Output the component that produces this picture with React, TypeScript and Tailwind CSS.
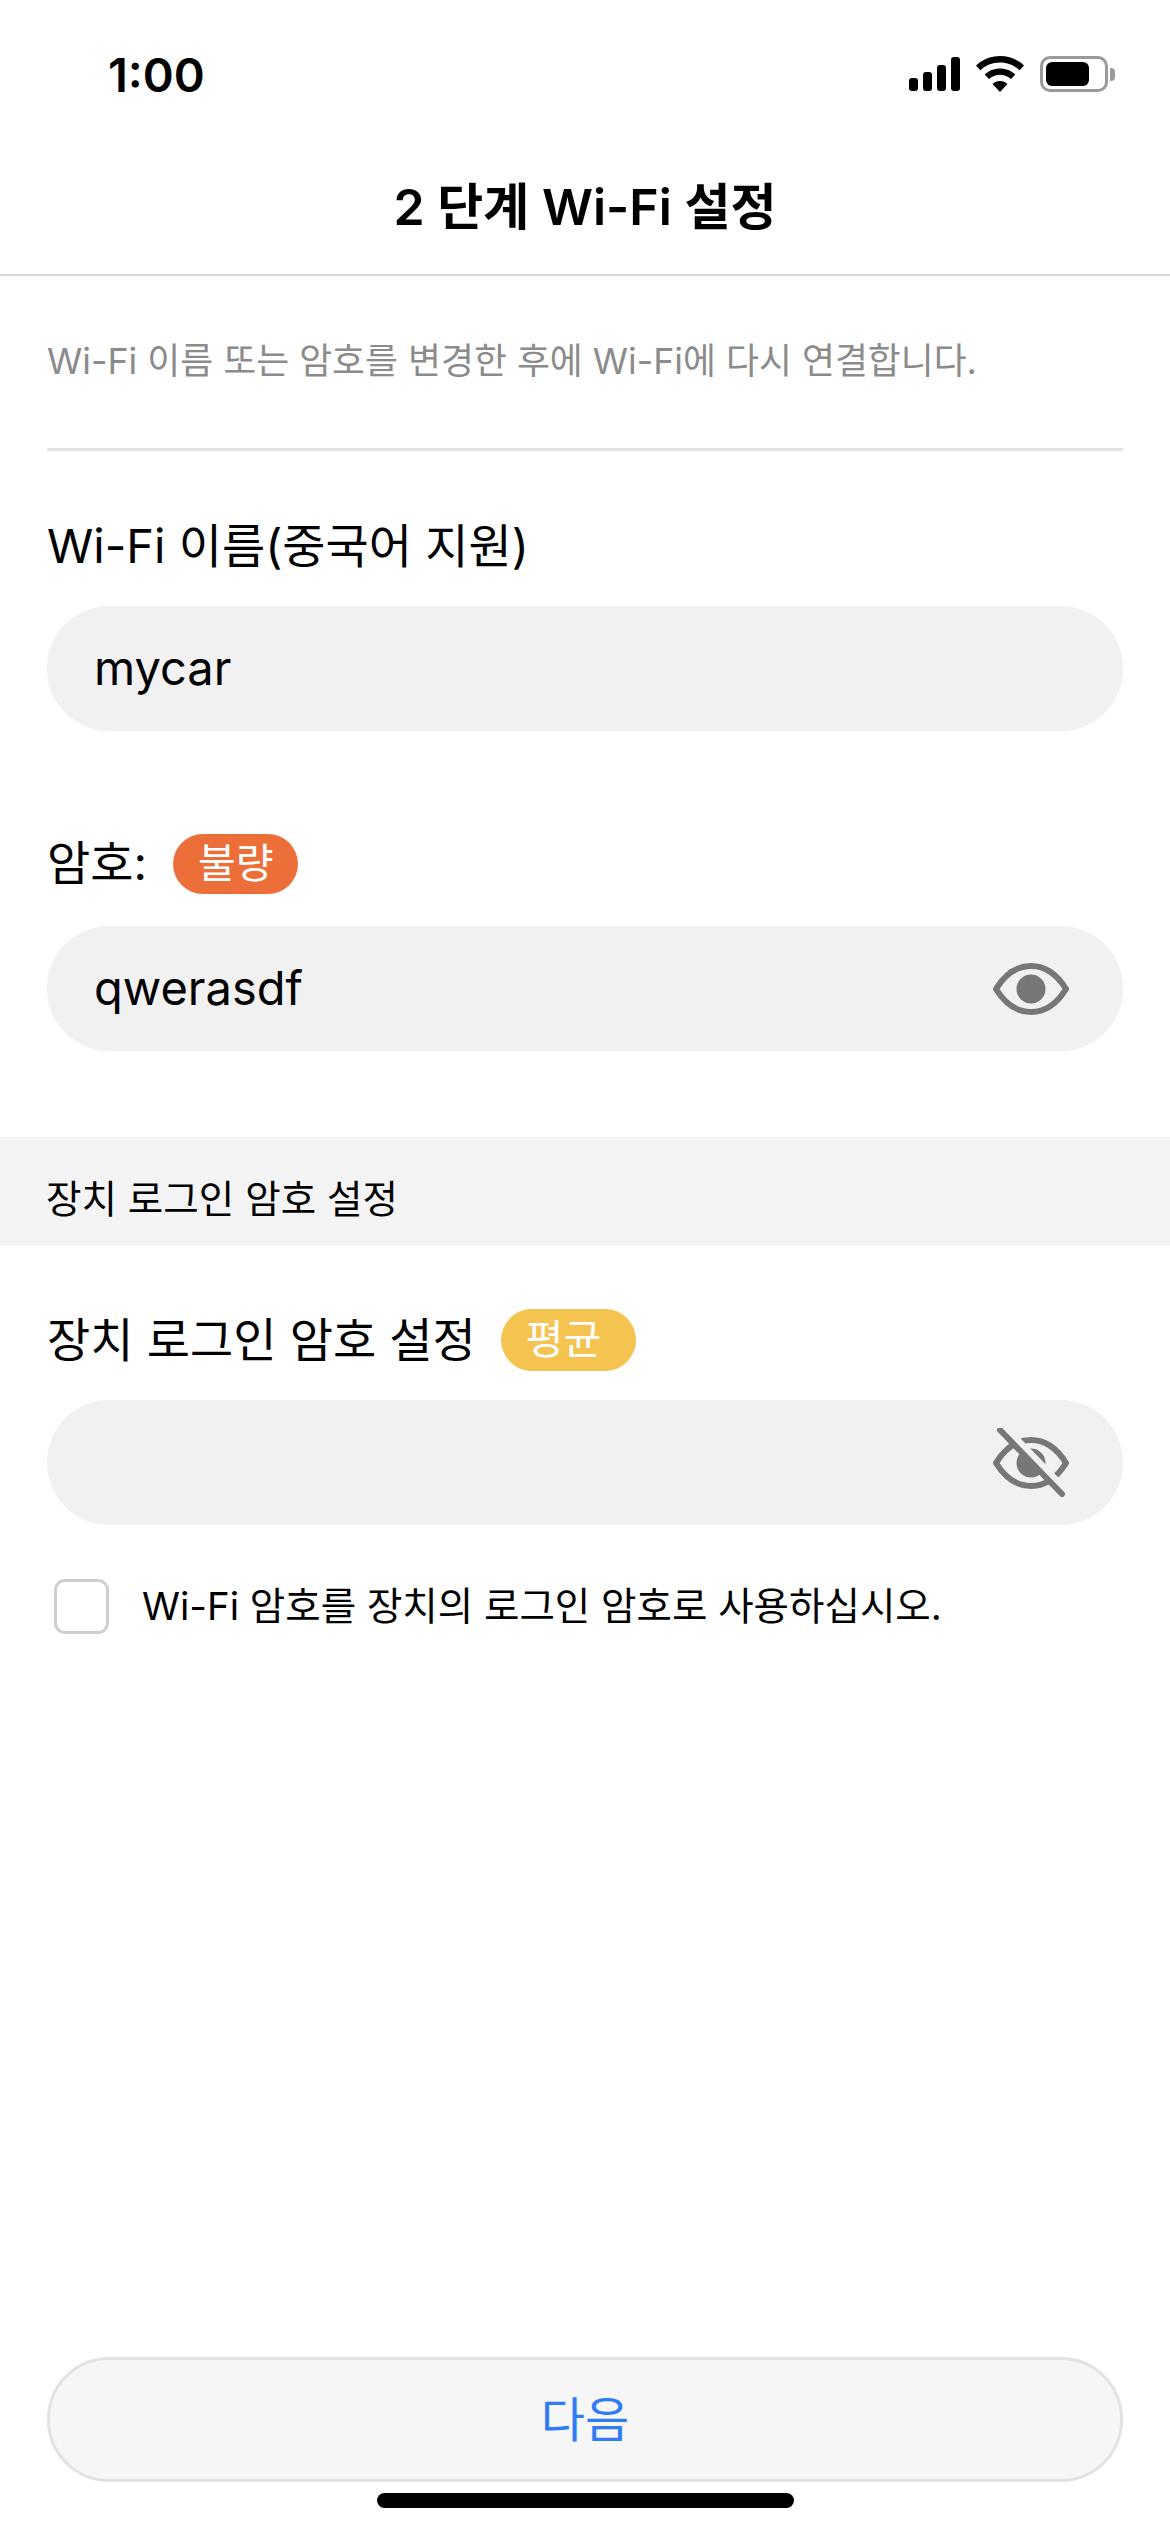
const KR = "font-['Inter','Noto_Sans_CJK_KR',sans-serif]";

function Signal() {
  return (
    <svg width="51" height="34" viewBox="0 0 51 34" fill="#000">
      <rect x="0" y="21" width="9" height="13" rx="3" />
      <rect x="14" y="15" width="9" height="19" rx="3" />
      <rect x="28" y="8" width="9" height="26" rx="3" />
      <rect x="42" y="0" width="9" height="34" rx="3" />
    </svg>
  );
}

function Wifi() {
  return (
    <svg width="48" height="36" viewBox="0 0 48 36" fill="#000">
      <path d="M24 0C33.500 0 41.800 3.600 48 9.600L43.600 14.200C38.600 9.400 31.700 6.400 24 6.400S9.400 9.400 4.400 14.200L0 9.600C6.200 3.600 14.500 0 24 0Z" />
      <path d="M24 12.500C30 12.500 35.300 14.800 39.300 18.600L35 23.100C32.100 20.400 28.200 18.800 24 18.800S15.900 20.400 13 23.100L8.700 18.600C12.700 14.800 18 12.500 24 12.500Z" />
      <path d="M24 25C26.900 25 29.500 26.100 31.400 27.900L24 36L16.600 27.900C18.500 26.100 21.100 25 24 25Z" />
    </svg>
  );
}

function Battery() {
  return (
    <div className="flex items-center">
      <div className="w-[68px] h-[36px] rounded-[10px] border-[3px] border-[#9a9a9a] p-[3px] pr-[16px]">
        <div className="w-full h-full rounded-[6px] bg-black" />
      </div>
      <div className="w-[5px] h-[13px] ml-[2px] rounded-r-[4px] bg-[#9a9a9a]" />
    </div>
  );
}

const EYE = "M5 35C13 22 25 12 40 12S67 22 75 35C67 48 55 58 40 58S13 48 5 35Z";

function Eye({ off }: { off?: boolean }) {
  return (
    <svg width="78" height="70" viewBox="0 0 78 70" fill="none">
      {off ? (
        <>
          <mask id="cut" maskUnits="userSpaceOnUse" x="0" y="0" width="78" height="70">
            <rect width="78" height="70" fill="#fff" />
            <path d="M15 2L77 66" stroke="#000" strokeWidth="9" />
          </mask>
          <g mask="url(#cut)">
            <path d={EYE} stroke="#777" strokeWidth="6" strokeLinejoin="round" />
            <circle cx="40" cy="35" r="14.500" fill="#777" />
          </g>
          <path d="M9 2L71 66" stroke="#777" strokeWidth="6" strokeLinecap="round" />
        </>
      ) : (
        <>
          <path d={EYE} stroke="#777" strokeWidth="6" strokeLinejoin="round" />
          <circle cx="40" cy="35" r="14.500" fill="#777" />
        </>
      )}
    </svg>
  );
}

function Field({ value, icon }: { value?: string; icon?: React.ReactNode }) {
  return (
    <div className="h-[125px] rounded-[62px] bg-[#f1f1f1] flex items-center justify-between pl-[47px] pr-[54px] text-[47px] text-black">
      <span>{value}</span>
      {icon}
    </div>
  );
}

export default function App() {
  return (
    <div className={`${KR} w-[1170px] h-[2532px] bg-white flex flex-col text-black overflow-hidden`}>
      <div className="h-[148px] flex items-center justify-between pl-[108px] pr-[55px]">
        <span className="text-[47px] font-semibold leading-none">1:00</span>
        <div className="flex items-center gap-[16px]">
          <Signal />
          <Wifi />
          <Battery />
        </div>
      </div>
      <div className="h-[128px] border-b-[2px] border-[#d6d6d6] flex items-center justify-center text-[50px] font-semibold pb-[8px]">
        2 단계 Wi-Fi 설정
      </div>
      <div className="px-[47px]">
        <div className="h-[175px] border-b-[3px] border-[#e4e4e4] flex items-center text-[35.800px] text-[#8b8b8b]">
          Wi-Fi 이름 또는 암호를 변경한 후에 Wi-Fi에 다시 연결합니다.
        </div>
        <div className="mt-[61px] h-[68px] flex items-center text-[47px]">Wi-Fi 이름(중국어 지원)</div>
        <div className="mt-[26px]">
          <Field value="mycar" />
        </div>
        <div className="mt-[103px] h-[60px] flex items-center gap-[26px] text-[47px]">
          <span className="pb-[2px]">암호:</span>
          <span className="h-[60px] px-[25px] rounded-[30px] bg-[#ec6f3a] text-white text-[41px] flex items-center">불량</span>
        </div>
        <div className="mt-[32px]">
          <Field value="qwerasdf" icon={<Eye />} />
        </div>
      </div>
      <div className="mt-[86px] h-[109px] bg-[#f4f4f4] px-[46px] flex items-center text-[38.600px] pt-[16px]">장치 로그인 암호 설정</div>
      <div className="px-[47px]">
        <div className="mt-[63px] h-[62px] flex items-center gap-[25px] text-[47px]">
          <span>장치 로그인 암호 설정</span>
          <span className="h-[62px] pl-[25px] pr-[35px] rounded-[31px] bg-[#f5c350] text-white text-[41px] flex items-center">평균</span>
        </div>
        <div className="mt-[29px]">
          <Field icon={<Eye off />} />
        </div>
        <div className="mt-[53px] flex items-center pl-[7px] text-[38.500px]">
          <div className="w-[55px] h-[55px] rounded-[11px] border-[3px] border-[#cfcfcf]" />
          <span className="ml-[33px]">Wi-Fi 암호를 장치의 로그인 암호로 사용하십시오.</span>
        </div>
      </div>
      <div className="mt-auto px-[47px]">
        <div className="h-[125px] rounded-[62px] bg-[#f6f6f6] border-[3px] border-[#e2e2e2] flex items-center justify-center text-[48px] text-[#2f7df6]">
          다음
        </div>
      </div>
      <div className="mt-[11px] mb-[24px] mx-auto w-[417px] h-[15px] rounded-full bg-black" />
    </div>
  );
}
